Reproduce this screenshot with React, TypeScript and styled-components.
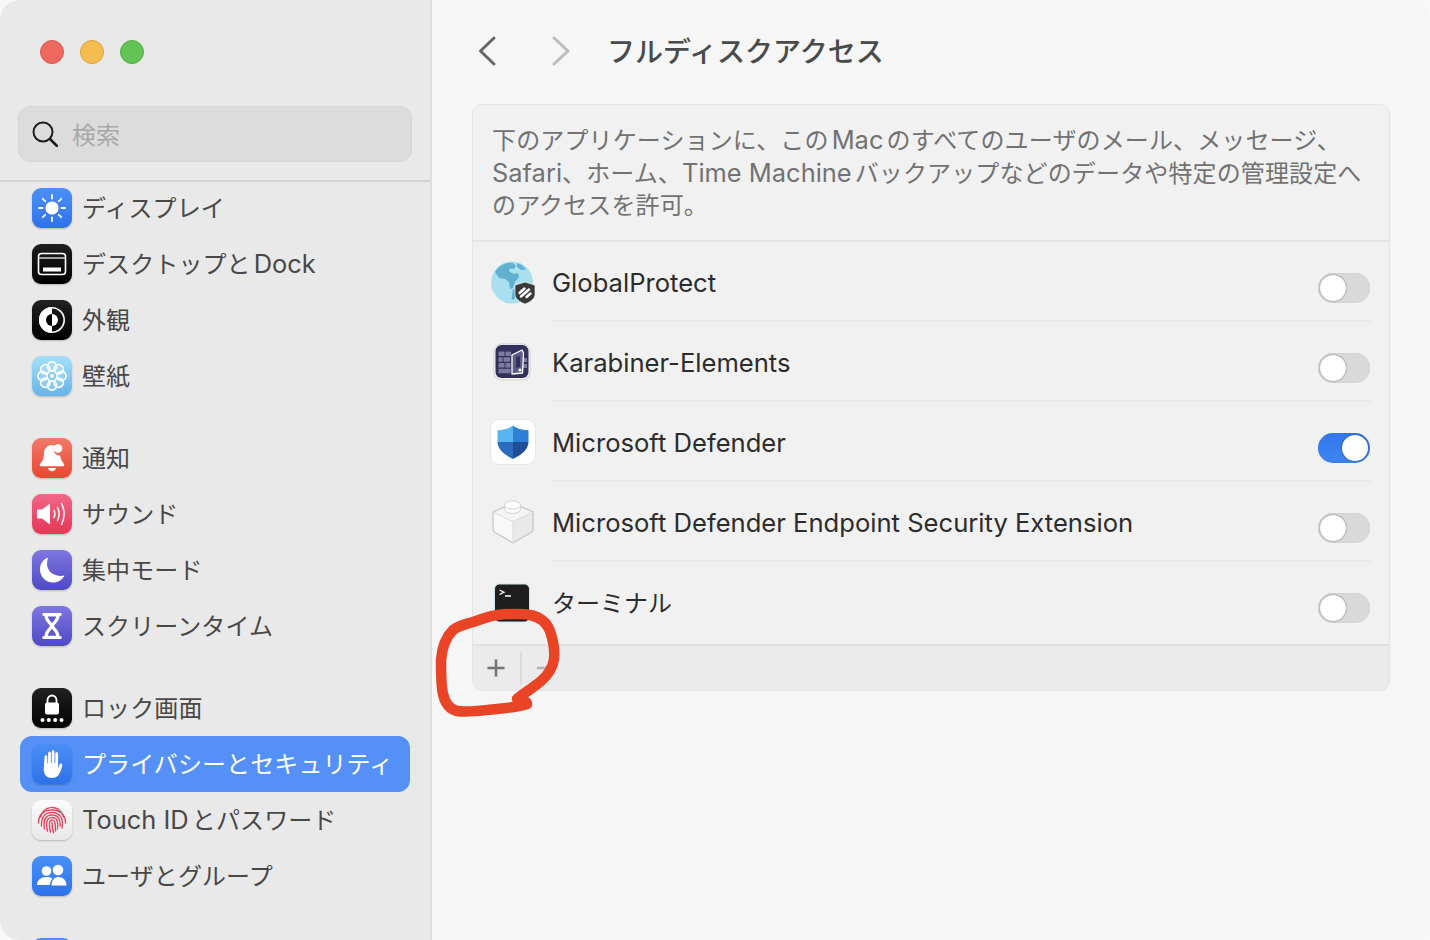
import React, { FC, ReactNode, useState } from 'react';
import styled, { createGlobalStyle } from 'styled-components';

const GlobalStyle = createGlobalStyle`
  html, body {
    margin: 0;
    padding: 0;
    background: #f8f8f8;
  }
  body {
    font-family: Inter, "Noto Sans CJK JP", "Noto Sans", sans-serif;
    text-autospace: normal;
  }
`;

const Window = styled.div`
  position: relative;
  display: flex;
  width: 1430px;
  height: 940px;
  border-radius: 20px;
  overflow: hidden;
  background: #f6f6f6;
`;

const Sidebar = styled.aside`
  display: flex;
  flex-direction: column;
  flex: 0 0 432px;
  height: 940px;
  box-sizing: border-box;
  background: #e9e9e9;
  border-right: 2px solid #dedede;
  overflow: hidden;
`;

const SidebarHeader = styled.div`
  flex: 0 0 182px;
  box-sizing: border-box;
  border-bottom: 2px solid #d3d3d3;
  padding: 40px 18px 0;
`;

const TrafficLights = styled.div`
  display: flex;
  gap: 16px;
  padding-left: 22px;
  margin-bottom: 42px;
`;

const Light = styled.span<{ $fill: string; $edge: string }>`
  width: 24px;
  height: 24px;
  box-sizing: border-box;
  border-radius: 50%;
  background: ${(props) => props.$fill};
  border: 1px solid ${(props) => props.$edge};
`;

const SearchBox = styled.div`
  display: flex;
  align-items: center;
  gap: 14px;
  width: 394px;
  height: 56px;
  box-sizing: border-box;
  padding-left: 13px;
  background: #dcdcdc;
  border: 1px solid #d5d5d5;
  border-radius: 12px;
  color: #a8a8a8;
  font-size: 24px;
`;

const Placeholder = styled.span`
  padding-bottom: 2px;
`;

const NavList = styled.nav`
  display: flex;
  flex-direction: column;
  gap: 26px;
  margin-top: -2px;
`;

const NavGroup = styled.div`
  display: flex;
  flex-direction: column;
`;

const NavRow = styled.div<{ $active?: boolean }>`
  display: flex;
  align-items: center;
  gap: 10px;
  flex: 0 0 56px;
  margin: 0 20px;
  padding: 0 12px;
  border-radius: 12px;
  background: ${(props) => (props.$active ? '#5490f5' : 'transparent')};
  color: ${(props) => (props.$active ? '#fff' : '#484848')};
  font-size: 24px;
  white-space: nowrap;
`;

const NavLabel = styled.span`
  padding-bottom: 4px;
  letter-spacing: 0.1px;
`;

const Latin = styled.span`
  font-size: 1.06em;
  letter-spacing: 0;
`;

const NavIcon = styled.span<{ $from: string; $to: string }>`
  display: flex;
  flex: 0 0 40px;
  width: 40px;
  height: 40px;
  border-radius: 9px;
  background: linear-gradient(${(props) => props.$from}, ${(props) => props.$to});
  box-shadow: 0 1px 2px rgba(0, 0, 0, 0.22);
`;

const Main = styled.main`
  flex: 1;
  display: flex;
  flex-direction: column;
  padding: 0 40px;
  min-width: 0;
`;

const TitleBar = styled.header`
  display: flex;
  align-items: center;
  flex: 0 0 104px;
  box-sizing: border-box;
  padding: 0 0 3px 6px;
`;

const NavButton = styled.span`
  display: flex;
  width: 32px;
  margin-right: 42px;
  &:nth-child(2) {
    margin-right: 23px;
  }
`;

const Title = styled.h1`
  margin: 0 0 2px;
  font-size: 28px;
  font-weight: 500;
  color: #4a4a4a;
`;

const Card = styled.section`
  display: flex;
  flex-direction: column;
  height: 587px;
  box-sizing: border-box;
  background: #f1f1f1;
  border: 1px solid #e4e4e4;
  border-radius: 10px;
  overflow: hidden;
`;

const Description = styled.p`
  flex: 0 0 137px;
  box-sizing: border-box;
  margin: 0;
  padding: 19px 19px 0;
  border-bottom: 2px solid #e5e5e5;
  color: #727272;
  font-size: 24px;
  letter-spacing: 0.13px;
  line-height: 32px;
  white-space: nowrap;
`;

const AppList = styled.div`
  flex: 1;
  overflow: hidden;
`;

const AppRow = styled.div`
  display: flex;
  height: 80px;
`;

const AppIcon = styled.span`
  display: flex;
  align-items: center;
  flex: 0 0 79px;
  padding-left: 17px;
  box-sizing: border-box;
`;

const AppBody = styled.div<{ $last?: boolean }>`
  flex: 1;
  display: flex;
  align-items: center;
  justify-content: space-between;
  margin-right: 19px;
  border-bottom: 2px solid ${(props) => (props.$last ? 'transparent' : '#e8e8e8')};
  color: #2c2c2c;
`;

const AppName = styled.span<{ $cjk?: boolean }>`
  font-size: ${(props) => (props.$cjk ? '24px' : '25.6px')};
  margin-top: ${(props) => (props.$cjk ? '0' : '2px')};
`;

const Track = styled.button<{ $on: boolean }>`
  display: flex;
  justify-content: ${(props) => (props.$on ? 'flex-end' : 'flex-start')};
  align-items: center;
  width: 52px;
  height: 30px;
  margin-top: 14px;
  padding: 2px;
  box-sizing: border-box;
  border: none;
  border-radius: 15px;
  background: ${(props) => (props.$on ? 'linear-gradient(#3277ec, #3f83f3)' : '#d9d9d9')};
  box-shadow: inset 0 0 1px rgba(0, 0, 0, 0.18);
`;

const Knob = styled.span`
  width: 26px;
  height: 26px;
  border-radius: 50%;
  background: #fff;
  box-shadow: 0 0 2px rgba(0, 0, 0, 0.55);
`;

const Footer = styled.footer`
  display: flex;
  align-items: center;
  flex: 0 0 46px;
  box-sizing: border-box;
  padding-left: 13px;
  background: #ebebeb;
  border-top: 2px solid #e0e0e0;
`;

const FooterButton = styled.span`
  display: flex;
  width: 20px;
`;

const FooterDivider = styled.span`
  width: 2px;
  height: 33px;
  margin: 0 14px 0 14px;
  background: #dcdcdc;
`;

const Annotation = styled.svg`
  position: absolute;
  left: 430px;
  top: 600px;
  pointer-events: none;
`;

const Toggle: FC<{ initial?: boolean }> = ({ initial = false }) => {
  const [on, setOn] = useState(initial);
  return (
    <Track $on={on} onClick={() => setOn(!on)}>
      <Knob />
    </Track>
  );
};

const Glyph: FC<{ children: ReactNode; size?: number }> = ({ children, size = 40 }) => (
  <svg width={size} height={size} viewBox={`0 0 ${size} ${size}`}>
    {children}
  </svg>
);

const SunGlyph = () => (
  <Glyph>
    <circle cx="20" cy="20" r="6.6" fill="#fff" />
    <g stroke="#fff" strokeWidth="1.8" strokeLinecap="round">
      <path d="M20 7v3.5M20 29.5V33M7 20h3.5M29.5 20H33M10.8 10.8l2.4 2.4M26.8 26.8l2.4 2.4M10.8 29.2l2.4-2.4M26.8 13.2l2.4-2.4" />
    </g>
  </Glyph>
);

const DesktopGlyph = () => (
  <Glyph>
    <rect x="6.5" y="9.5" width="27" height="21" rx="3" fill="none" stroke="#fff" strokeWidth="1.6" />
    <path d="M7 14h26" stroke="#fff" strokeWidth="1.2" />
    <rect x="11" y="23.5" width="18" height="4" fill="#fff" />
  </Glyph>
);

const AppearanceGlyph = () => (
  <Glyph>
    <path d="M20 7a13 13 0 0 0 0 26z" fill="#fff" />
    <circle cx="20" cy="20" r="12.2" fill="none" stroke="#fff" strokeWidth="1.6" />
    <path d="M20 14a6 6 0 0 0 0 12z" fill="#000" />
    <path d="M20 14a6 6 0 0 1 0 12z" fill="#fff" />
  </Glyph>
);

const FlowerGlyph = () => (
  <Glyph>
    <g fill="rgba(255,255,255,0.14)" stroke="#fff" strokeWidth="1.7">
      {[0, 45, 90, 135, 180, 225, 270, 315].map((angle) => (
        <circle key={angle} cx="20" cy="10.5" r="4.6" transform={`rotate(${angle} 20 20)`} />
      ))}
    </g>
    <circle cx="20" cy="20" r="2" fill="#fff" />
  </Glyph>
);

const BellGlyph = () => (
  <Glyph>
    <path d="M20 7c-5 0-8 3.6-8 8.4 0 5-1.5 7.8-4 10.6-.8 1 0 2.2 1.200 2.200h21.600c1.200 0 2-1.200 1.200-2.200-2.200-2.500-3.400-5-3.800-8.400-3.800.2-6.600-2.600-6.200-6.600.1-1.300.5-2.400 1.100-3.200C22 7.300 21 7 20 7z" fill="#fff" />
    <circle cx="26" cy="10.500" r="4.300" fill="#fff" />
    <path d="M16 30h8c-.3 2-2 3.200-4 3.200s-3.700-1.200-4-3.200z" fill="#fff" />
  </Glyph>
);

const SoundGlyph = () => (
  <Glyph>
    <path d="M5 15.500h5L18 9.500v21l-8-6H5z" fill="#fff" />
    <g fill="none" stroke="#fff" strokeWidth="1.500" strokeLinecap="round">
      <path d="M22 16.500c1.200 2.300 1.200 4.700 0 7" />
      <path d="M25.500 13.500c2.200 4.300 2.200 8.700 0 13" />
      <path d="M29.500 9.500c3.400 6.800 3.400 14.200 0 21" />
    </g>
  </Glyph>
);

const MoonGlyph = () => (
  <Glyph>
    <path d="M16.500 7.500C11 9.300 8 14 8 19.500 8 26.600 13.600 32.500 21 32.500c5 0 9.300-2.600 11.500-7-8.500 1.800-17.500-3-17.500-11.800 0-2.400.5-4.500 1.500-6.700z" fill="#fff" />
  </Glyph>
);

const HourglassGlyph = () => (
  <Glyph>
    <path d="M10.500 7h19v2.800h-2c0 4.500-3.500 7.200-5.500 10.200 2 3 5.500 5.700 5.500 10.200h2V33h-19v-2.800h2c0-4.500 3.500-7.200 5.500-10.200-2-3-5.500-5.700-5.500-10.200h-2z" fill="#fff" />
    <path d="M15.800 10.500c.5 2.500 2.700 4.800 4.200 6.600 1.500-1.800 3.700-4.100 4.200-6.600z" fill="#5f58cf" />
    <path d="M15.800 29.800c.3-2.800 2.800-5.300 4.200-7 1.400 1.700 3.900 4.200 4.200 7z" fill="#5f58cf" />
  </Glyph>
);

const LockGlyph = () => (
  <Glyph>
    <path d="M15.500 15.500v-3.200c0-2.900 2-4.800 4.500-4.800s4.500 1.900 4.500 4.800v3.200" fill="none" stroke="#fff" strokeWidth="1.800" />
    <rect x="13" y="14.500" width="14" height="12" rx="2" fill="#fff" />
    <g fill="#fff">
      <circle cx="10.500" cy="32" r="2" />
      <circle cx="16.800" cy="32" r="2" />
      <circle cx="23.200" cy="32" r="2" />
      <circle cx="29.500" cy="32" r="2" />
    </g>
  </Glyph>
);

const HandGlyph = () => (
  <Glyph>
    <path d="M12.500 13c0-2.400 2.800-2.400 2.800 0v6h.8V9.500c0-2.400 2.800-2.400 2.800 0V19h.8V8c0-2.400 2.800-2.400 2.800 0v11h.8V10c0-2.400 2.800-2.400 2.800 0v14l1.200-3c.9-2.400 3.600-1.500 3 .8-1 3.600-2 6.800-3.300 8.800-1.500 2.300-3.700 3.400-6.900 3.400-5.500 0-8.400-3.400-8.400-9z" fill="#fff" />
  </Glyph>
);

const FingerprintGlyph = () => (
  <Glyph>
    <g fill="none" stroke="#e0455e" strokeWidth="1.400" strokeLinecap="round" strokeDasharray="14 1.400">
      <path d="M8.500 17c2-6 6-9.500 11.500-9.500S29.500 11 31.500 17" />
      <path d="M6.500 23c0-8 5.500-13 13.500-13 7.800 0 13.500 5 13.500 13" />
      <path d="M9.500 26c-.5-8 3-13.500 10.500-13.500S30.500 18 30.500 24c0 1.500-.2 3-.5 4" />
      <path d="M12.500 29c-1-5-.8-14 7.500-14s8.200 7.500 8 11" />
      <path d="M15.500 31c-1-4-2.200-13.500 4.500-13.500S25.800 24 25.500 29" />
      <path d="M18.500 32c-1-4-2.500-12 1.500-12s3.300 6.500 3.500 11" />
      <path d="M21.500 32.500c-.7-2.500-1.500-6-1.500-9.800" />
    </g>
  </Glyph>
);

const UsersGlyph = () => (
  <Glyph>
    <circle cx="14.500" cy="15" r="4.800" fill="#fff" />
    <circle cx="26" cy="14" r="5.300" fill="#fff" />
    <path d="M5 29c0-5 4-8 9.500-8 2.500 0 4.500.6 6 1.600-1.700 1.800-2.500 4-2.500 6.400z" fill="#fff" />
    <path d="M19.500 29.500c0-5 3-8.500 6.500-8.500 4.800 0 8.500 3.300 8.500 8.500z" fill="#fff" />
  </Glyph>
);

const GlobalProtectIcon = () => (
  <Glyph size={46}>
    <circle cx="22" cy="23.500" r="21" fill="#aadff0" />
    <path d="M7 10c4-4 10-7 16-6l3 3-2 3-4-.5-1 3 5 2.500 4-1 1 4-4 5-2 6-3 1-1-7-4-3-6-1-4-6z" fill="#5fb1cf" />
    <path d="M27 4c3.500 1 7 3.500 9 6.500l-5 .5-4-3z" fill="#5fb1cf" />
    <path d="M23 30l3 1 .5 4-3 6-2-1z" fill="#5fb1cf" />
    <path d="M35 23l10 3.200v9c0 4.500-4.500 7.800-10 9.800-5.500-2-10-5.300-10-9.800v-9z" fill="#3a3a3a" stroke="#fff" strokeWidth="0.600" />
    <g stroke="#fff" strokeWidth="2.500" strokeLinecap="round">
      <path d="M29.500 34l5-4.500M31 37.500l8-7M36.500 38l4-3.500" />
    </g>
  </Glyph>
);

const KarabinerIcon = () => (
  <Glyph size={46}>
    <rect x="4" y="5" width="36" height="36" rx="7.500" fill="#f7f7f7" stroke="#cfcfcf" strokeWidth="1" />
    <rect x="5.500" y="6" width="33" height="33" rx="6" fill="#33305c" />
    <g fill="#7d7aa0">
      <rect x="8.500" y="12.500" width="6" height="4.500" rx="0.500" />
      <rect x="15.500" y="12.500" width="5.500" height="4.500" rx="0.500" />
      <rect x="8.500" y="18.200" width="4" height="4.500" rx="0.500" />
      <rect x="13.500" y="18.200" width="6.500" height="4.500" rx="0.500" />
      <rect x="8.500" y="24" width="6" height="4.500" rx="0.500" />
      <rect x="15.500" y="24" width="5" height="4.500" rx="0.500" />
      <rect x="8.500" y="29.800" width="12" height="4.500" rx="0.500" />
      <rect x="33" y="19" width="4" height="4" />
      <rect x="33" y="25" width="4" height="4" />
    </g>
    <path d="M22 16L32 11l1.500 3-1 20-10.500 1z" fill="#5f5b88" stroke="#fff" strokeWidth="1.300" strokeLinejoin="round" />
    <path d="M26 18l4-1v11l-4 1z" fill="#33305c" />
    <circle cx="30" cy="31" r="1.600" fill="#fff" />
  </Glyph>
);

const DefenderIcon = () => (
  <Glyph size={46}>
    <rect x="0.500" y="0.500" width="45" height="45" rx="9" fill="#fff" stroke="#e6e6e6" />
    <path d="M23 6.500c3 2.600 7.500 4.400 15.500 4.700V23H23z" fill="#2e7fd6" />
    <path d="M23 6.500c-3 2.600-7.500 4.400-15.500 4.700V23H23z" fill="#57b4ef" />
    <path d="M7.500 23c.4 7 5.500 12 15.500 17V23z" fill="#2a6abf" />
    <path d="M38.500 23c-.4 7-5.500 12-15.500 17V23z" fill="#1e4f96" />
  </Glyph>
);

const ExtensionIcon = () => (
  <Glyph size={46}>
    <path d="M3 13l20 9.500V44L5 33.500c-1.300-.8-2-2-2-3.500z" fill="#f8f8f8" />
    <path d="M43 13L23 22.500V44l18-10.500c1.300-.8 2-2 2-3.500z" fill="#e9e9e9" />
    <path d="M3 13L23 4l20 9-20 9.500z" fill="#f5f5f5" />
    <path d="M3 13L23 4l20 9v17c0 1.500-.7 2.700-2 3.500L23 44 5 33.500c-1.300-.8-2-2-2-3.500z" fill="none" stroke="#c4c4c4" strokeWidth="1.200" strokeLinejoin="round" />
    <path d="M3 13l20 9.500L43 13M23 22.500V44" fill="none" stroke="#dcdcdc" strokeWidth="1" />
    <path d="M14.500 6v4.500c0 2.200 3.600 4 8 4s8-1.800 8-4V6z" fill="#fafafa" stroke="#d4d4d4" />
    <ellipse cx="22.500" cy="6" rx="8" ry="4" fill="#fff" stroke="#d4d4d4" />
  </Glyph>
);

const TerminalIcon = () => (
  <Glyph size={46}>
    <rect x="4.500" y="5" width="35" height="38" rx="5" fill="#1e1e1e" stroke="#cfe6ee" strokeWidth="1" />
    <path d="M9.500 11l4.500 2.200L9.500 15.500" fill="none" stroke="#fff" strokeWidth="1.300" />
    <path d="M15 17h6" stroke="#fff" strokeWidth="1.500" />
  </Glyph>
);

const SearchGlyph = () => (
  <svg width="26" height="26" viewBox="0 0 26 26" fill="none" stroke="#1d1d1d" strokeWidth="2">
    <circle cx="11" cy="11" r="9.500" />
    <path d="M18 18l7 7" strokeWidth="2.600" strokeLinecap="round" />
  </svg>
);

const Chevron: FC<{ direction: 'back' | 'forward' }> = ({ direction }) => (
  <svg width="32" height="32" viewBox="0 0 32 32" fill="none" strokeWidth="3" strokeLinecap="round" strokeLinejoin="round">
    {direction === 'back' ? <path d="M16 3L2.500 16 16 29" stroke="#666" /> : <path d="M2 3l14 13L2 29" stroke="#bcbcbc" />}
  </svg>
);

const groups: { label: ReactNode; key: string; from: string; to: string; glyph: ReactNode; active?: boolean }[][] = [
  [
    { key: 'display', label: 'ディスプレイ', from: '#4b90f8', to: '#2e72ea', glyph: <SunGlyph /> },
    { key: 'dock', label: <>デスクトップと<Latin>Dock</Latin></>, from: '#1e1e1e', to: '#000', glyph: <DesktopGlyph /> },
    { key: 'appearance', label: '外観', from: '#222', to: '#000', glyph: <AppearanceGlyph /> },
    { key: 'wallpaper', label: '壁紙', from: '#a5e0f8', to: '#66b4e8', glyph: <FlowerGlyph /> },
  ],
  [
    { key: 'notifications', label: '通知', from: '#f07a6a', to: '#e9462f', glyph: <BellGlyph /> },
    { key: 'sound', label: 'サウンド', from: '#f0688a', to: '#e83554', glyph: <SoundGlyph /> },
    { key: 'focus', label: '集中モード', from: '#7f77e0', to: '#4f48c4', glyph: <MoonGlyph /> },
    { key: 'screentime', label: 'スクリーンタイム', from: '#7f77e0', to: '#4f48c4', glyph: <HourglassGlyph /> },
  ],
  [
    { key: 'lock', label: 'ロック画面', from: '#222', to: '#000', glyph: <LockGlyph /> },
    { key: 'privacy', label: 'プライバシーとセキュリティ', from: '#4a8ef6', to: '#2e72ea', glyph: <HandGlyph />, active: true },
    { key: 'touchid', label: <><Latin>Touch ID</Latin>とパスワード</>, from: '#fbfbfb', to: '#e8e8e8', glyph: <FingerprintGlyph /> },
    { key: 'users', label: 'ユーザとグループ', from: '#4a90f8', to: '#2e72ea', glyph: <UsersGlyph /> },
  ],
  [{ key: 'next', label: '', from: '#4a90f8', to: '#2e72ea', glyph: null }],
];

const apps = [
  { name: 'GlobalProtect', icon: <GlobalProtectIcon />, on: false },
  { name: 'Karabiner-Elements', icon: <KarabinerIcon />, on: false },
  { name: 'Microsoft Defender', icon: <DefenderIcon />, on: true },
  { name: 'Microsoft Defender Endpoint Security Extension', icon: <ExtensionIcon />, on: false },
  { name: 'ターミナル', icon: <TerminalIcon />, on: false, cjk: true },
];

export default function App() {
  return (
    <Window>
      <GlobalStyle />
      <Sidebar>
        <SidebarHeader>
          <TrafficLights>
            <Light $fill="#ee6a5f" $edge="#d9574c" />
            <Light $fill="#f5bd4f" $edge="#dba23c" />
            <Light $fill="#61c454" $edge="#4fad43" />
          </TrafficLights>
          <SearchBox>
            <SearchGlyph />
            <Placeholder>検索</Placeholder>
          </SearchBox>
        </SidebarHeader>
        <NavList>
          {groups.map((group, index) => (
            <NavGroup key={index}>
              {group.map((item) => (
                <NavRow key={item.key} $active={item.active}>
                  <NavIcon $from={item.from} $to={item.to}>
                    {item.glyph}
                  </NavIcon>
                  <NavLabel>{item.label}</NavLabel>
                </NavRow>
              ))}
            </NavGroup>
          ))}
        </NavList>
      </Sidebar>
      <Main>
        <TitleBar>
          <NavButton>
            <Chevron direction="back" />
          </NavButton>
          <NavButton>
            <Chevron direction="forward" />
          </NavButton>
          <Title>フルディスクアクセス</Title>
        </TitleBar>
        <Card>
          <Description>
            下のアプリケーションに、この<Latin>Mac</Latin>のすべてのユーザのメール、メッセージ、
            <br />
            <Latin>Safari</Latin>、ホーム、<Latin>Time Machine</Latin>バックアップなどのデータや特定の管理設定へ
            <br />
            のアクセスを許可。
          </Description>
          <AppList>
            {apps.map((app, index) => (
              <AppRow key={app.name}>
                <AppIcon>{app.icon}</AppIcon>
                <AppBody $last={index === apps.length - 1}>
                  <AppName $cjk={app.cjk}>{app.name}</AppName>
                  <Toggle initial={app.on} />
                </AppBody>
              </AppRow>
            ))}
          </AppList>
          <Footer>
            <FooterButton>
              <svg width="20" height="20" viewBox="0 0 20 20" stroke="#737373" strokeWidth="2.600">
                <path d="M10 1.500v17M1.500 10h17" />
              </svg>
            </FooterButton>
            <FooterDivider />
            <FooterButton>
              <svg width="20" height="20" viewBox="0 0 20 20" stroke="#b4b4b4" strokeWidth="2.600">
                <path d="M1 10h18" />
              </svg>
            </FooterButton>
          </Footer>
        </Card>
      </Main>
      <Annotation width="140" height="125" viewBox="430 600 140 125" fill="none">
        <path
          d="M497 615C508 614 522 613 530 615C540 617 547 623 550 631C553 640 555 650 554 659C553 667 548 675 541 681C533 688 524 693 517 699C521 702 527 700 527 704C518 707 508 708 497 709C484 710 468 713 457 711C449 709 445 703 443 694C441 686 441 668 441 660C442 647 446 637 453 630C460 625 466 624 473 622C482 619 489 616 497 615Z"
          stroke="#ea4426"
          strokeWidth="10.500"
          strokeLinejoin="round"
          strokeLinecap="round"
        />
      </Annotation>
    </Window>
  );
}
